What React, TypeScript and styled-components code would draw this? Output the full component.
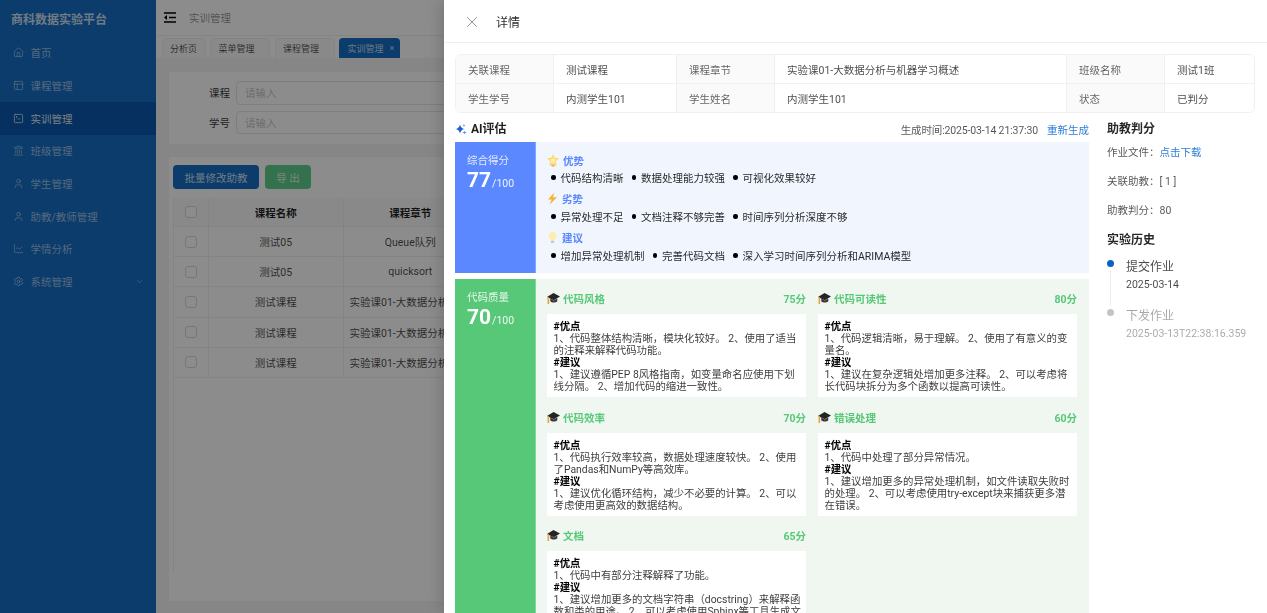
import React from 'react';
import styled, { createGlobalStyle } from 'styled-components';
import { Home, PanelsTopLeft, SquareTerminal, Landmark, User, ChartLine, Settings, ChevronDown, X } from 'lucide-react';

const primary = '#146dc4';

const Global = createGlobalStyle`
  html, body { margin: 0; height: 100%; overflow: hidden; }
  body { font-family: Roboto, "Noto Sans CJK SC", sans-serif; font-size: 10.5px; color: rgba(0,0,0,.75); }
  * { box-sizing: border-box; }
`;

const Page = styled.div`display: flex; width: 1267px; height: 613px; overflow: hidden; background: #f5f5f5;`;
const Sidebar = styled.aside`width: 156px; flex: none; background: ${primary}; color: rgba(255,255,255,.6);`;
const Brand = styled.div`height: 36.5px; padding: 12px 0 0 11px; font-size: 12px; font-weight: 700; line-height: 16px; color: rgba(255,255,255,.8); white-space: nowrap;`;
const MenuList = styled.nav`display: flex; flex-direction: column;`;
const MenuItem = styled.div<{ $active?: boolean }>`
  height: 32.7px; display: flex; align-items: center; gap: 6.5px; padding: 0 12px 0 13px;
  background: ${p => (p.$active ? '#0a58ad' : 'transparent')};
  color: ${p => (p.$active ? 'rgba(255,255,255,.9)' : 'rgba(255,255,255,.58)')};
  svg { flex: none; }
`;
const MenuText = styled.span`flex: 1;`;

const Main = styled.main`flex: 1; min-width: 0; display: flex; flex-direction: column;`;
const TopBar = styled.header`height: 36px; flex: none; background: #fff; display: flex; align-items: center; gap: 13px; padding: 0 8px; color: rgba(0,0,0,.45); border-bottom: 1px solid #f0f0f0;`;
const TabBar = styled.div`height: 22px; flex: none; background: #fff; display: flex; gap: 4.5px; padding: 1.5px 0 0 5.5px;`;
const Tab = styled.div<{ $active?: boolean; $w: number }>`
  width: ${p => p.$w}px; height: 20.5px; display: flex; align-items: center; padding-left: 7.5px; gap: 6px; font-size: 9px;
  border: 1px solid ${p => (p.$active ? primary : '#f0f0f0')}; border-bottom: 0; border-radius: 4px 4px 0 0;
  background: ${p => (p.$active ? primary : '#fafafa')};
  color: ${p => (p.$active ? 'rgba(255,255,255,.75)' : 'rgba(0,0,0,.7)')};
`;
const TabClose = styled.span`font-size: 9px; line-height: 1;`;
const Content = styled.div`flex: 1; min-height: 0; padding: 14px 0 0 13px; display: flex; flex-direction: column; gap: 13px;`;
const SearchCard = styled.section`height: 72px; width: 1300px; flex: none; background: #fff; padding: 9px 0 0 0; display: flex; flex-direction: column; gap: 6px;`;
const SearchRow = styled.div`display: flex; align-items: center; gap: 7px; height: 23.5px; padding-left: 40px;`;
const SearchLabel = styled.label`width: 20px; color: rgba(0,0,0,.8); white-space: nowrap;`;
const SearchInput = styled.div`width: 500px; height: 23.5px; border: 1px solid #e6e6e6; border-radius: 4px; padding: 0 8px; display: flex; align-items: center; color: rgba(0,0,0,.28);`;
const TableCard = styled.section`height: 444px; width: 1300px; flex: none; background: #fff; padding: 8px 4px;`;
const Toolbar = styled.div`display: flex; gap: 6px; height: 24px;`;
const ToolButton = styled.button<{ $bg: string; $w: number }>`
  width: ${p => p.$w}px; height: 24px; border: 0; border-radius: 4px; padding: 0; font: inherit; background: ${p => p.$bg}; color: rgba(255,255,255,.8);
`;
const TableBox = styled.div`margin-top: 9px; height: 375px; border-left: 1px solid #f0f0f0;`;
const TRow = styled.div<{ $head?: boolean }>`
  display: grid; grid-template-columns: 35px 134.5px 134.5px 1fr; height: ${p => (p.$head ? 29 : 30.2)}px;
  border-bottom: 1px solid #f0f0f0; background: ${p => (p.$head ? '#fafafa' : '#fff')};
  font-weight: ${p => (p.$head ? 700 : 400)}; color: ${p => (p.$head ? 'rgba(0,0,0,.88)' : 'rgba(0,0,0,.72)')};
`;
const TCell = styled.div`display: flex; align-items: center; justify-content: center; border-right: 1px solid #f0f0f0; padding: 0 6px; min-width: 0;`;
const TText = styled.span`min-width: 0; white-space: nowrap; overflow: hidden; text-overflow: ellipsis;`;
const Check = styled.span`width: 12px; height: 12px; border: 1px solid #d9d9d9; border-radius: 3px; background: #fff;`;

const Mask = styled.div`position: fixed; inset: 0; background: rgba(0,0,0,.45);`;
const Drawer = styled.aside`
  position: fixed; top: 0; bottom: 0; right: 0; width: 823px; background: #fff; overflow: hidden;
  box-shadow: -4px 0 12px rgba(0,0,0,.1), -8px 0 20px rgba(0,0,0,.06);
`;
const DrawerHead = styled.header`height: 43px; padding: 1px 0 0 18.5px; display: flex; align-items: center; gap: 15.5px; border-bottom: 1px solid #f0f0f0; color: rgba(0,0,0,.85); font-size: 12px; svg { color: rgba(0,0,0,.5); }`;
const DrawerBody = styled.div`padding: 11px 12px 0 11px;`;
const Info = styled.div`
  display: grid; grid-template-columns: 98px 123px 98px 292px 98px 91px; grid-auto-rows: 29px;
  border: 1px solid #f0f0f0; border-radius: 6px; overflow: hidden; height: 59px;
`;
const InfoCell = styled.div<{ $label?: boolean; $last?: boolean; $bottom?: boolean }>`
  display: flex; align-items: center; padding: 0 12px; white-space: nowrap;
  background: ${p => (p.$label ? '#fafafa' : '#fff')};
  color: ${p => (p.$label ? 'rgba(0,0,0,.62)' : 'rgba(0,0,0,.72)')};
  border-right: ${p => (p.$last ? 0 : '1px solid #f0f0f0')};
  border-bottom: ${p => (p.$bottom ? 0 : '1px solid #f0f0f0')};
`;
const Columns = styled.div`display: grid; grid-template-columns: 634px 1fr; column-gap: 18px; margin-top: 8px;`;
const HeadRow = styled.div`display: flex; align-items: center; height: 16px; margin-bottom: 5px;`;
const AiTitle = styled.h3`margin: 0; display: flex; align-items: center; gap: 4px; font-size: 12px; font-weight: 700; line-height: 16px; color: rgba(0,0,0,.88); flex: 1;`;
const GenTime = styled.span`color: rgba(0,0,0,.68); letter-spacing: -.14px;`;
const LinkText = styled.a`color: #2f7fd6; margin-left: 9px;`;
const ScoreCard = styled.section<{ $bg: string }>`display: flex; background: ${p => p.$bg}; margin-bottom: 6px; min-height: 131px;`;
const ScoreSide = styled.div<{ $bg: string }>`width: 81px; flex: none; background: ${p => p.$bg}; color: #fff; padding: 11px 0 0 12px; border-right: 1px solid rgba(255,255,255,.25);`;
const ScoreName = styled.div`line-height: 16px; color: rgba(255,255,255,.85);`;
const ScoreValue = styled.div`display: flex; align-items: baseline; line-height: 20px; margin-top: 1px; gap: 1px;`;
const ScoreNum = styled.b`font-size: 21px; font-weight: 700;`;
const ScoreMax = styled.span`font-size: 10.5px; color: rgba(255,255,255,.9);`;
const Sections = styled.div`flex: 1; padding: 9.5px 12px 0 11px; display: flex; flex-direction: column; gap: 3.9px;`;
const Section = styled.div``;
const SectionHead = styled.div`display: flex; align-items: center; gap: 4px; height: 17px; font-weight: 700; color: #5b87ff;`;
const Bullets = styled.ul`list-style: none; margin: 0; padding: 0 0 0 4px; display: flex; gap: 8px; height: 18px; align-items: center; color: rgba(0,0,0,.85);`;
const Bullet = styled.li`display: flex; align-items: center; gap: 5px; &::before { content: ''; width: 4.5px; height: 4.5px; border-radius: 50%; background: #000; }`;
const QualityGrid = styled.div`flex: 1; padding: 12px 12px 0 11px; display: grid; grid-template-columns: 259px 259px; column-gap: 12px; row-gap: 12.5px; align-items: start;`;
const Quality = styled.article``;
const QualityHead = styled.div`display: flex; align-items: center; gap: 3px; height: 15px; margin-bottom: 8px; font-weight: 700; color: #57c878;`;
const QualityName = styled.span`flex: 1;`;
const QualityBox = styled.div`background: #fff; padding: 7px 3px 4px 6.5px; font-size: 10.4px; line-height: 12px; color: rgba(0,0,0,.78); min-height: 83px;`;
const BoxHead = styled.div`font-weight: 700; color: #000;`;
const Side = styled.div`display: flex; flex-direction: column;`;
const SideTitle = styled.h3`margin: 0; font-size: 12px; line-height: 16px; font-weight: 700; color: rgba(0,0,0,.85);`;
const SideLine = styled.div`height: 29px; display: flex; align-items: center; color: rgba(0,0,0,.68); white-space: pre;`;
const SideLink = styled.a`color: #2f7fd6;`;
const SideFields = styled.div`margin-bottom: 8px;`;
const Timeline = styled.ol`list-style: none; margin: 9px 0 0; padding: 0;`;
const TimeItem = styled.li`display: grid; grid-template-columns: 7px 1fr; column-gap: 12px; height: 49px;`;
const DotCol = styled.div`display: flex; flex-direction: column; align-items: center;`;
const Dot = styled.span<{ $c: string }>`width: 7px; height: 7px; border-radius: 50%; background: ${p => p.$c}; margin-top: 3px; flex: none;`;
const Tail = styled.span`flex: 1; width: 1px; background: #ececec; margin-top: 3px;`;
const TimeText = styled.div<{ $muted?: boolean }>`padding-top: 2px; color: ${p => (p.$muted ? 'rgba(0,0,0,.35)' : 'rgba(0,0,0,.72)')};`;
const TimeTitle = styled.div`font-size: 12px; line-height: 16px;`;
const TimeDate = styled.div`line-height: 16px; margin-top: 2px; white-space: nowrap;`;

const Cap = () => (
  <svg width="13" height="13" viewBox="0 0 24 24">
    <path d="M6 12v5c2 2 4 2.500 6.500 2.500S17 19 19 17v-5l-6.500 3.500z" fill="#3b3a38" />
    <path d="M12 2L0 9l12.500 6L24 8.500z" fill="#262524" />
    <path d="M1 9.500l2-.5 1 3.500V22H1z" fill="#e8a33d" />
  </svg>
);
const Glow = () => (
  <svg width="12" height="13" viewBox="0 0 24 26">
    <path d="M12 0l3.200 7.500L24 8.500l-6.500 6 2 9-7.500-4.500-7.500 4.500 2-9L0 8.500l8.800-1z" fill="#fdd663" />
    <path d="M12 6l2 4.500 5 .6-3.700 3.400 1 5L12 17l-4.300 2.500 1-5L5 11.100l5-.6z" fill="#fff0b5" />
    <path d="M8 21h8l-1.500 4h-5z" fill="#f2a93b" />
  </svg>
);
const Bolt = () => (
  <svg width="11" height="13" viewBox="0 0 24 26">
    <path d="M16 0L2 15h8L6 26l16-16h-9z" fill="#f9b233" />
  </svg>
);
const Bulb = () => (
  <svg width="11" height="13" viewBox="0 0 24 26">
    <path d="M12 0a9 9 0 0 0-6 15.500c1.200 1.200 1.800 2.300 1.800 4h8.400c0-1.700.6-2.800 1.800-4A9 9 0 0 0 12 0z" fill="#fdeeb0" />
    <rect x="8.500" y="20" width="7" height="5" rx="1.500" fill="#c4c4c4" />
  </svg>
);
const Sparkle = () => (
  <svg width="12" height="12" viewBox="0 0 24 24">
    <path d="M10 3c1 5 3 7 8 9-5 2-7 4-8 9-1-5-3-7-8-9 5-2 7-4 8-9z" fill="#1c5fd0" />
    <path d="M19 15c.5 2 1.500 3 4 4-2.500 1-3.500 2-4 4-.5-2-1.500-3-4-4 2.500-1 3.500-2 4-4z" fill="#5b9bf0" />
    <path d="M18 2c.4 1.500 1 2.200 3 3-2 .8-2.600 1.500-3 3-.4-1.500-1-2.200-3-3 2-.8 2.600-1.500 3-3z" fill="#5b9bf0" />
  </svg>
);
const Fold = () => (
  <svg width="12" height="11" viewBox="0 0 12 11">
    <path d="M0 1h12M5 5.500h7M0 10h12" stroke="#000" strokeWidth="1.400" />
    <path d="M0 5.500L3 3v5z" fill="#000" />
  </svg>
);

const menu: [React.ElementType, string, boolean?, boolean?][] = [
  [Home, '首页'], [PanelsTopLeft, '课程管理'], [SquareTerminal, '实训管理', true], [Landmark, '班级管理'],
  [User, '学生管理'], [User, '助教/教师管理'], [ChartLine, '学情分析'], [Settings, '系统管理', false, true],
];
const rows = [
  ['测试05', 'Queue队列'], ['测试05', 'quicksort'],
  ['测试课程', '实验课01-大数据分析与机器学习概述'], ['测试课程', '实验课01-大数据分析与机器学习概述'], ['测试课程', '实验课01-大数据分析与机器学习概述'],
];
const info = [
  ['关联课程', '测试课程', '课程章节', '实验课01-大数据分析与机器学习概述', '班级名称', '测试1班'],
  ['学生学号', '内测学生101', '学生姓名', '内测学生101', '状态', '已判分'],
];
const summary: [React.ReactNode, string, string[]][] = [
  [<Glow />, '优势', ['代码结构清晰', '数据处理能力较强', '可视化效果较好']],
  [<Bolt />, '劣势', ['异常处理不足', '文档注释不够完善', '时间序列分析深度不够']],
  [<Bulb />, '建议', ['增加异常处理机制', '完善代码文档', '深入学习时间序列分析和ARIMA模型']],
];
const quality = [
  { name: '代码风格', score: '75分', good: '1、代码整体结构清晰，模块化较好。 2、使用了适当的注释来解释代码功能。', tip: '1、建议遵循PEP 8风格指南，如变量命名应使用下划线分隔。 2、增加代码的缩进一致性。' },
  { name: '代码可读性', score: '80分', good: '1、代码逻辑清晰，易于理解。 2、使用了有意义的变量名。', tip: '1、建议在复杂逻辑处增加更多注释。 2、可以考虑将长代码块拆分为多个函数以提高可读性。' },
  { name: '代码效率', score: '70分', good: '1、代码执行效率较高，数据处理速度较快。 2、使用了Pandas和NumPy等高效库。', tip: '1、建议优化循环结构，减少不必要的计算。 2、可以考虑使用更高效的数据结构。' },
  { name: '错误处理', score: '60分', good: '1、代码中处理了部分异常情况。', tip: '1、建议增加更多的异常处理机制，如文件读取失败时的处理。 2、可以考虑使用try-except块来捕获更多潜在错误。' },
  { name: '文档', score: '65分', good: '1、代码中有部分注释解释了功能。', tip: '1、建议增加更多的文档字符串（docstring）来解释函数和类的用途。 2、可以考虑使用Sphinx等工具生成文档。' },
];

export default function App() {
  return (
    <Page>
      <Global />
      <Sidebar>
        <Brand>商科数据实验平台</Brand>
        <MenuList>
          {menu.map(([Icon, label, active, more]) => (
            <MenuItem key={label} $active={active}>
              <Icon size={11} strokeWidth={1.6} />
              <MenuText>{label}</MenuText>
              {more && <ChevronDown size={9} strokeWidth={1.6} />}
            </MenuItem>
          ))}
        </MenuList>
      </Sidebar>
      <Main>
        <TopBar><Fold /><span>实训管理</span></TopBar>
        <TabBar>
          <Tab $w={44}>分析页</Tab>
          <Tab $w={60}>菜单管理</Tab>
          <Tab $w={60}>课程管理</Tab>
          <Tab $w={61} $active>实训管理<TabClose>×</TabClose></Tab>
        </TabBar>
        <Content>
          <SearchCard>
            <SearchRow><SearchLabel>课程</SearchLabel><SearchInput>请输入</SearchInput></SearchRow>
            <SearchRow><SearchLabel>学号</SearchLabel><SearchInput>请输入</SearchInput></SearchRow>
          </SearchCard>
          <TableCard>
            <Toolbar>
              <ToolButton $bg={primary} $w={86}>批量修改助教</ToolButton>
              <ToolButton $bg="#5fd08c" $w={46}>导 出</ToolButton>
            </Toolbar>
            <TableBox>
              <TRow $head>
                <TCell><Check /></TCell><TCell><TText>课程名称</TText></TCell><TCell><TText>课程章节</TText></TCell><TCell />
              </TRow>
              {rows.map(([a, b], i) => (
                <TRow key={i}>
                  <TCell><Check /></TCell><TCell><TText>{a}</TText></TCell><TCell><TText>{b}</TText></TCell><TCell />
                </TRow>
              ))}
            </TableBox>
          </TableCard>
        </Content>
      </Main>
      <Mask />
      <Drawer>
        <DrawerHead><X size={18} strokeWidth={1.1} /><span>详情</span></DrawerHead>
        <DrawerBody>
          <Info>
            {info.map((row, r) => row.map((text, c) => (
              <InfoCell key={`${r}-${c}`} $label={c % 2 === 0} $last={c === 5} $bottom={r === 1}>{text}</InfoCell>
            )))}
          </Info>
          <Columns>
            <div>
              <HeadRow>
                <AiTitle><Sparkle />AI评估</AiTitle>
                <GenTime>生成时间:2025-03-14 21:37:30</GenTime>
                <LinkText>重新生成</LinkText>
              </HeadRow>
              <ScoreCard $bg="#f1f5fe">
                <ScoreSide $bg="#5b87ff">
                  <ScoreName>综合得分</ScoreName>
                  <ScoreValue><ScoreNum>77</ScoreNum><ScoreMax>/100</ScoreMax></ScoreValue>
                </ScoreSide>
                <Sections>
                  {summary.map(([icon, title, items]) => (
                    <Section key={title}>
                      <SectionHead>{icon}{title}</SectionHead>
                      <Bullets>{items.map(t => <Bullet key={t}>{t}</Bullet>)}</Bullets>
                    </Section>
                  ))}
                </Sections>
              </ScoreCard>
              <ScoreCard $bg="#f0f7f0">
                <ScoreSide $bg="#57c878">
                  <ScoreName>代码质量</ScoreName>
                  <ScoreValue><ScoreNum>70</ScoreNum><ScoreMax>/100</ScoreMax></ScoreValue>
                </ScoreSide>
                <QualityGrid>
                  {quality.map(q => (
                    <Quality key={q.name}>
                      <QualityHead><Cap /><QualityName>{q.name}</QualityName><span>{q.score}</span></QualityHead>
                      <QualityBox>
                        <BoxHead>#优点</BoxHead>
                        <div>{q.good}</div>
                        <BoxHead>#建议</BoxHead>
                        <div>{q.tip}</div>
                      </QualityBox>
                    </Quality>
                  ))}
                </QualityGrid>
              </ScoreCard>
            </div>
            <Side>
              <SideTitle>助教判分</SideTitle>
              <SideFields>
                <SideLine>作业文件：<SideLink>点击下载</SideLink></SideLine>
                <SideLine>关联助教：[ 1 ]</SideLine>
                <SideLine>助教判分：80</SideLine>
              </SideFields>
              <SideTitle>实验历史</SideTitle>
              <Timeline>
                <TimeItem>
                  <DotCol><Dot $c="#0a62c4" /><Tail /></DotCol>
                  <TimeText><TimeTitle>提交作业</TimeTitle><TimeDate>2025-03-14</TimeDate></TimeText>
                </TimeItem>
                <TimeItem>
                  <DotCol><Dot $c="#c4c4c4" /></DotCol>
                  <TimeText $muted><TimeTitle>下发作业</TimeTitle><TimeDate>2025-03-13T22:38:16.359</TimeDate></TimeText>
                </TimeItem>
              </Timeline>
            </Side>
          </Columns>
        </DrawerBody>
      </Drawer>
    </Page>
  );
}
